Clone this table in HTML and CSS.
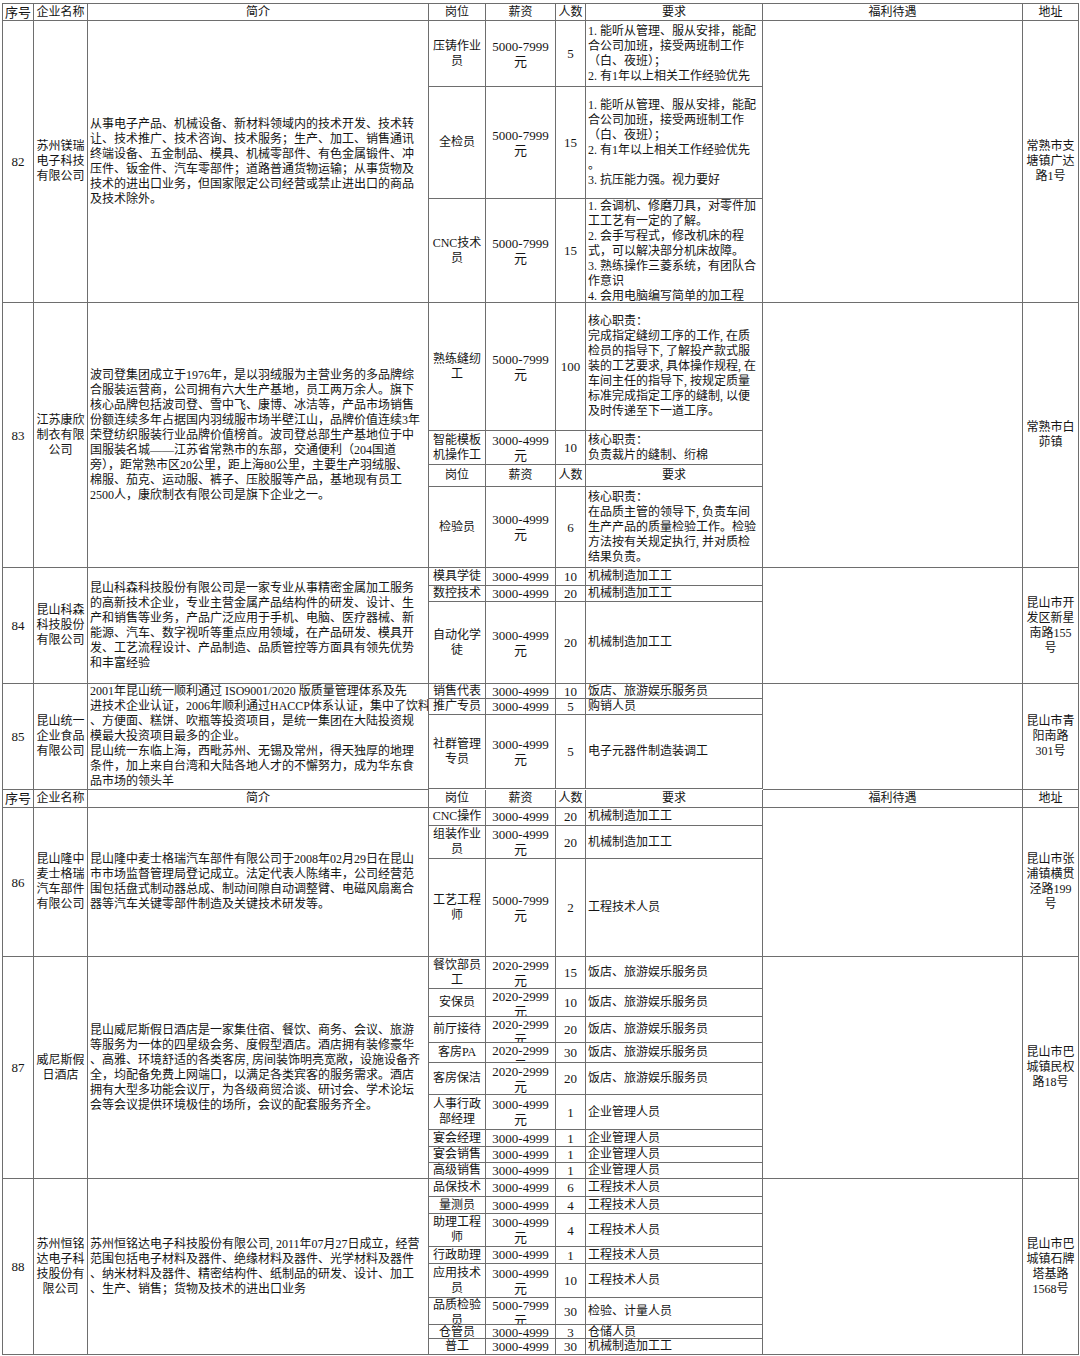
FILE: index.html
```html
<!DOCTYPE html>
<html lang="zh-CN">
<head>
<meta charset="utf-8">
<title>招聘信息表</title>
<link rel="stylesheet" href="styles.css">
</head>
<body>
<div class="sheet">

  <div class="row h17">
    <div class="c w-no"><div>序号</div></div>
    <div class="c w-name"><div>企业名称</div></div>
    <div class="c w-intro ctr"><div>简介</div></div>
    <div class="c w-pos"><div>岗位</div></div>
    <div class="c w-pay hd"><div>薪资</div></div>
    <div class="c w-num hd"><div>人数</div></div>
    <div class="c w-req ctr"><div>要求</div></div>
    <div class="c w-wel"><div>福利待遇</div></div>
    <div class="c w-addr"><div>地址</div></div>
  </div>

  <!-- 82 -->
  <div class="row">
    <div class="c w-no"><div>82</div></div>
    <div class="c w-name"><div>苏州镁瑞<br>电子科技<br>有限公司</div></div>
    <div class="c w-intro"><div>从事电子产品、机械设备、新材料领域内的技术开发、技术转<br>让、技术推广、技术咨询、技术服务；生产、加工、销售通讯<br>终端设备、五金制品、模具、机械零部件、有色金属锻件、冲<br>压件、钣金件、汽车零部件；道路普通货物运输；从事货物及<br>技术的进出口业务，但国家限定公司经营或禁止进出口的商品<br>及技术除外。</div></div>
    <div class="jobs">
      <div class="job h66">
        <div class="c w-pos"><div>压铸作业<br>员</div></div>
        <div class="c w-pay"><div>5000-7999<br>元</div></div>
        <div class="c w-num"><div>5</div></div>
        <div class="c w-req"><div>1. 能听从管理、服从安排，能配<br>合公司加班，接受两班制工作<br>（白、夜班）；<br>2. 有1年以上相关工作经验优先</div></div>
      </div>
      <div class="job h112">
        <div class="c w-pos"><div>全检员</div></div>
        <div class="c w-pay"><div>5000-7999<br>元</div></div>
        <div class="c w-num"><div>15</div></div>
        <div class="c w-req"><div>1. 能听从管理、服从安排，能配<br>合公司加班，接受两班制工作<br>（白、夜班）；<br>2. 有1年以上相关工作经验优先<br>。<br>3. 抗压能力强。视力要好</div></div>
      </div>
      <div class="job h104">
        <div class="c w-pos"><div>CNC技术<br>员</div></div>
        <div class="c w-pay"><div>5000-7999<br>元</div></div>
        <div class="c w-num"><div>15</div></div>
        <div class="c w-req"><div>1. 会调机、修磨刀具，对零件加<br>工工艺有一定的了解。<br>2. 会手写程式，修改机床的程<br>式，可以解决部分机床故障。<br>3. 熟练操作三菱系统，有团队合<br>作意识<br>4. 会用电脑编写简单的加工程<br>序</div></div>
      </div>
    </div>
    <div class="c w-wel"><div></div></div>
    <div class="c w-addr"><div>常熟市支<br>塘镇广达<br>路1号</div></div>
  </div>

  <!-- 83 -->
  <div class="row">
    <div class="c w-no"><div>83</div></div>
    <div class="c w-name"><div>江苏康欣<br>制衣有限<br>公司</div></div>
    <div class="c w-intro"><div>波司登集团成立于1976年，是以羽绒服为主营业务的多品牌综<br>合服装运营商，公司拥有六大生产基地，员工两万余人。旗下<br>核心品牌包括波司登、雪中飞、康博、冰洁等，产品市场销售<br>份额连续多年占据国内羽绒服市场半壁江山，品牌价值连续3年<br>荣登纺织服装行业品牌价值榜首。波司登总部生产基地位于中<br>国服装名城——江苏省常熟市的东部，交通便利（204国道<br>旁），距常熟市区20公里，距上海80公里，主要生产羽绒服、<br>棉服、茄克、运动服、裤子、压胶服等产品，基地现有员工<br>2500人，康欣制衣有限公司是旗下企业之一。</div></div>
    <div class="jobs">
      <div class="job h128">
        <div class="c w-pos"><div>熟练缝纫<br>工</div></div>
        <div class="c w-pay"><div>5000-7999<br>元</div></div>
        <div class="c w-num"><div>100</div></div>
        <div class="c w-req"><div>核心职责：<br>完成指定缝纫工序的工作, 在质<br>检员的指导下, 了解投产款式服<br>装的工艺要求, 具体操作规程, 在<br>车间主任的指导下, 按规定质量<br>标准完成指定工序的缝制, 以便<br>及时传递至下一道工序。</div></div>
      </div>
      <div class="job h34">
        <div class="c w-pos"><div>智能模板<br>机操作工</div></div>
        <div class="c w-pay"><div>3000-4999<br>元</div></div>
        <div class="c w-num"><div>10</div></div>
        <div class="c w-req"><div>核心职责：<br>负责裁片的缝制、绗棉</div></div>
      </div>
      <div class="job h22">
        <div class="c w-pos"><div>岗位</div></div>
        <div class="c w-pay hd"><div>薪资</div></div>
        <div class="c w-num hd"><div>人数</div></div>
        <div class="c w-req ctr"><div>要求</div></div>
      </div>
      <div class="job h81">
        <div class="c w-pos"><div>检验员</div></div>
        <div class="c w-pay"><div>3000-4999<br>元</div></div>
        <div class="c w-num"><div>6</div></div>
        <div class="c w-req"><div>核心职责：<br>在品质主管的领导下, 负责车间<br>生产产品的质量检验工作。检验<br>方法按有关规定执行, 并对质检<br>结果负责。</div></div>
      </div>
    </div>
    <div class="c w-wel"><div></div></div>
    <div class="c w-addr"><div>常熟市白<br>茆镇</div></div>
  </div>

  <!-- 84 -->
  <div class="row">
    <div class="c w-no"><div>84</div></div>
    <div class="c w-name"><div>昆山科森<br>科技股份<br>有限公司</div></div>
    <div class="c w-intro"><div>昆山科森科技股份有限公司是一家专业从事精密金属加工服务<br>的高新技术企业，专业主营金属产品结构件的研发、设计、生<br>产和销售等业务，产品广泛应用于手机、电脑、医疗器械、新<br>能源、汽车、数字视听等重点应用领域，在产品研发、模具开<br>发、工艺流程设计、产品制造、品质管控等方面具有领先优势<br>和丰富经验</div></div>
    <div class="jobs">
      <div class="job h18">
        <div class="c w-pos"><div>模具学徒</div></div>
        <div class="c w-pay"><div>3000-4999</div></div>
        <div class="c w-num"><div>10</div></div>
        <div class="c w-req"><div>机械制造加工工</div></div>
      </div>
      <div class="job h16">
        <div class="c w-pos"><div>数控技术<br>员</div></div>
        <div class="c w-pay"><div>3000-4999<br>元</div></div>
        <div class="c w-num"><div>20</div></div>
        <div class="c w-req"><div>机械制造加工工</div></div>
      </div>
      <div class="job h82">
        <div class="c w-pos"><div>自动化学<br>徒</div></div>
        <div class="c w-pay"><div>3000-4999<br>元</div></div>
        <div class="c w-num"><div>20</div></div>
        <div class="c w-req"><div>机械制造加工工</div></div>
      </div>
    </div>
    <div class="c w-wel"><div></div></div>
    <div class="c w-addr"><div>昆山市开<br>发区新星<br>南路155<br>号</div></div>
  </div>

  <!-- 85 -->
  <div class="row">
    <div class="c w-no"><div>85</div></div>
    <div class="c w-name"><div>昆山统一<br>企业食品<br>有限公司</div></div>
    <div class="c w-intro"><div>2001年昆山统一顺利通过 ISO9001/2020 版质量管理体系及先<br>进技术企业认证，2006年顺利通过HACCP体系认证，集中了饮料<br>、方便面、糕饼、吹瓶等投资项目，是统一集团在大陆投资规<br>模最大投资项目最多的企业。<br>昆山统一东临上海，西毗苏州、无锡及常州，得天独厚的地理<br>条件，加上来自台湾和大陆各地人才的不懈努力，成为华东食<br>品市场的领头羊</div></div>
    <div class="jobs">
      <div class="job h15">
        <div class="c w-pos"><div>销售代表</div></div>
        <div class="c w-pay"><div>3000-4999</div></div>
        <div class="c w-num"><div>10</div></div>
        <div class="c w-req"><div>饭店、旅游娱乐服务员</div></div>
      </div>
      <div class="job h16">
        <div class="c w-pos"><div>推广专员</div></div>
        <div class="c w-pay"><div>3000-4999</div></div>
        <div class="c w-num"><div>5</div></div>
        <div class="c w-req"><div>购销人员</div></div>
      </div>
      <div class="job h74">
        <div class="c w-pos"><div>社群管理<br>专员</div></div>
        <div class="c w-pay"><div>3000-4999<br>元</div></div>
        <div class="c w-num"><div>5</div></div>
        <div class="c w-req"><div>电子元器件制造装调工</div></div>
      </div>
    </div>
    <div class="c w-wel"><div></div></div>
    <div class="c w-addr"><div>昆山市青<br>阳南路<br>301号</div></div>
  </div>

  <div class="row h18">
    <div class="c w-no"><div>序号</div></div>
    <div class="c w-name"><div>企业名称</div></div>
    <div class="c w-intro ctr"><div>简介</div></div>
    <div class="c w-pos"><div>岗位</div></div>
    <div class="c w-pay hd"><div>薪资</div></div>
    <div class="c w-num hd"><div>人数</div></div>
    <div class="c w-req ctr"><div>要求</div></div>
    <div class="c w-wel"><div>福利待遇</div></div>
    <div class="c w-addr"><div>地址</div></div>
  </div>

  <!-- 86 -->
  <div class="row">
    <div class="c w-no"><div>86</div></div>
    <div class="c w-name"><div>昆山隆中<br>麦士格瑞<br>汽车部件<br>有限公司</div></div>
    <div class="c w-intro"><div>昆山隆中麦士格瑞汽车部件有限公司于2008年02月29日在昆山<br>市市场监督管理局登记成立。法定代表人陈绪丰，公司经营范<br>围包括盘式制动器总成、制动间隙自动调整臂、电磁风扇离合<br>器等汽车关键零部件制造及关键技术研发等。</div></div>
    <div class="jobs">
      <div class="job h18">
        <div class="c w-pos"><div>CNC操作</div></div>
        <div class="c w-pay"><div>3000-4999</div></div>
        <div class="c w-num"><div>20</div></div>
        <div class="c w-req"><div>机械制造加工工</div></div>
      </div>
      <div class="job h33">
        <div class="c w-pos"><div>组装作业<br>员</div></div>
        <div class="c w-pay"><div>3000-4999<br>元</div></div>
        <div class="c w-num"><div>20</div></div>
        <div class="c w-req"><div>机械制造加工工</div></div>
      </div>
      <div class="job h98">
        <div class="c w-pos"><div>工艺工程<br>师</div></div>
        <div class="c w-pay"><div>5000-7999<br>元</div></div>
        <div class="c w-num"><div>2</div></div>
        <div class="c w-req"><div>工程技术人员</div></div>
      </div>
    </div>
    <div class="c w-wel"><div></div></div>
    <div class="c w-addr"><div>昆山市张<br>浦镇横贯<br>泾路199<br>号</div></div>
  </div>

  <!-- 87 -->
  <div class="row">
    <div class="c w-no"><div>87</div></div>
    <div class="c w-name"><div>威尼斯假<br>日酒店</div></div>
    <div class="c w-intro"><div>昆山威尼斯假日酒店是一家集住宿、餐饮、商务、会议、旅游<br>等服务为一体的四星级会务、度假型酒店。酒店拥有装修豪华<br>、高雅、环境舒适的各类客房, 房间装饰明亮宽敞，设施设备齐<br>全，均配备免费上网端口，以满足各类宾客的服务需求。酒店<br>拥有大型多功能会议厅，为各级商贸洽谈、研讨会、学术论坛<br>会等会议提供环境极佳的场所，会议的配套服务齐全。</div></div>
    <div class="jobs">
      <div class="job h32">
        <div class="c w-pos"><div>餐饮部员<br>工</div></div>
        <div class="c w-pay"><div>2020-2999<br>元</div></div>
        <div class="c w-num"><div>15</div></div>
        <div class="c w-req"><div>饭店、旅游娱乐服务员</div></div>
      </div>
      <div class="job h28">
        <div class="c w-pos"><div>安保员</div></div>
        <div class="c w-pay"><div>2020-2999<br>元</div></div>
        <div class="c w-num"><div>10</div></div>
        <div class="c w-req"><div>饭店、旅游娱乐服务员</div></div>
      </div>
      <div class="job h26">
        <div class="c w-pos"><div>前厅接待</div></div>
        <div class="c w-pay"><div>2020-2999<br>元</div></div>
        <div class="c w-num"><div>20</div></div>
        <div class="c w-req"><div>饭店、旅游娱乐服务员</div></div>
      </div>
      <div class="job h20">
        <div class="c w-pos"><div>客房PA</div></div>
        <div class="c w-pay"><div>2020-2999<br>元</div></div>
        <div class="c w-num"><div>30</div></div>
        <div class="c w-req"><div>饭店、旅游娱乐服务员</div></div>
      </div>
      <div class="job h32">
        <div class="c w-pos"><div>客房保洁</div></div>
        <div class="c w-pay"><div>2020-2999<br>元</div></div>
        <div class="c w-num"><div>20</div></div>
        <div class="c w-req"><div>饭店、旅游娱乐服务员</div></div>
      </div>
      <div class="job h35">
        <div class="c w-pos"><div>人事行政<br>部经理</div></div>
        <div class="c w-pay"><div>3000-4999<br>元</div></div>
        <div class="c w-num"><div>1</div></div>
        <div class="c w-req"><div>企业管理人员</div></div>
      </div>
      <div class="job h17">
        <div class="c w-pos"><div>宴会经理</div></div>
        <div class="c w-pay"><div>3000-4999</div></div>
        <div class="c w-num"><div>1</div></div>
        <div class="c w-req"><div>企业管理人员</div></div>
      </div>
      <div class="job h16">
        <div class="c w-pos"><div>宴会销售</div></div>
        <div class="c w-pay"><div>3000-4999</div></div>
        <div class="c w-num"><div>1</div></div>
        <div class="c w-req"><div>企业管理人员</div></div>
      </div>
      <div class="job h16">
        <div class="c w-pos"><div>高级销售</div></div>
        <div class="c w-pay"><div>3000-4999</div></div>
        <div class="c w-num"><div>1</div></div>
        <div class="c w-req"><div>企业管理人员</div></div>
      </div>
    </div>
    <div class="c w-wel"><div></div></div>
    <div class="c w-addr"><div>昆山市巴<br>城镇民权<br>路18号</div></div>
  </div>

  <!-- 88 -->
  <div class="row">
    <div class="c w-no"><div>88</div></div>
    <div class="c w-name"><div>苏州恒铭<br>达电子科<br>技股份有<br>限公司</div></div>
    <div class="c w-intro"><div>苏州恒铭达电子科技股份有限公司, 2011年07月27日成立，经营<br>范围包括电子材料及器件、绝缘材料及器件、光学材料及器件<br>、纳米材料及器件、精密结构件、纸制品的研发、设计、加工<br>、生产、销售；货物及技术的进出口业务</div></div>
    <div class="jobs">
      <div class="job h18">
        <div class="c w-pos"><div>品保技术</div></div>
        <div class="c w-pay"><div>3000-4999</div></div>
        <div class="c w-num"><div>6</div></div>
        <div class="c w-req"><div>工程技术人员</div></div>
      </div>
      <div class="job h17">
        <div class="c w-pos"><div>量测员</div></div>
        <div class="c w-pay"><div>3000-4999</div></div>
        <div class="c w-num"><div>4</div></div>
        <div class="c w-req"><div>工程技术人员</div></div>
      </div>
      <div class="job h33">
        <div class="c w-pos"><div>助理工程<br>师</div></div>
        <div class="c w-pay"><div>3000-4999<br>元</div></div>
        <div class="c w-num"><div>4</div></div>
        <div class="c w-req"><div>工程技术人员</div></div>
      </div>
      <div class="job h17">
        <div class="c w-pos"><div>行政助理</div></div>
        <div class="c w-pay"><div>3000-4999<br>元</div></div>
        <div class="c w-num"><div>1</div></div>
        <div class="c w-req"><div>工程技术人员</div></div>
      </div>
      <div class="job h34">
        <div class="c w-pos"><div>应用技术<br>员</div></div>
        <div class="c w-pay"><div>3000-4999<br>元</div></div>
        <div class="c w-num"><div>10</div></div>
        <div class="c w-req"><div>工程技术人员</div></div>
      </div>
      <div class="job h27">
        <div class="c w-pos"><div>品质检验<br>员</div></div>
        <div class="c w-pay"><div>5000-7999<br>元</div></div>
        <div class="c w-num"><div>30</div></div>
        <div class="c w-req"><div>检验、计量人员</div></div>
      </div>
      <div class="job h14">
        <div class="c w-pos"><div>仓管员</div></div>
        <div class="c w-pay"><div>3000-4999</div></div>
        <div class="c w-num"><div>3</div></div>
        <div class="c w-req"><div>仓储人员</div></div>
      </div>
      <div class="job h16">
        <div class="c w-pos"><div>普工</div></div>
        <div class="c w-pay"><div>3000-4999</div></div>
        <div class="c w-num"><div>30</div></div>
        <div class="c w-req"><div>机械制造加工工</div></div>
      </div>
    </div>
    <div class="c w-wel"><div></div></div>
    <div class="c w-addr"><div>昆山市巴<br>城镇石牌<br>塔基路<br>1568号</div></div>
  </div>

</div>
</body>
</html>
```

FILE: styles.css
```css
html, body {
  margin: 0;
  padding: 0;
  background: #ffffff;
}

.sheet {
  margin: 3px 0 0 2px;
  width: 1077px;
  box-sizing: border-box;
  border-top: 1px solid #6e6e6e;
  border-left: 1px solid #6e6e6e;
  font-family: "Liberation Serif", "Noto Sans CJK SC", serif;
  font-size: 12px;
  line-height: 15px;
  color: #141414;
}

.row {
  display: flex;
}

.jobs {
  display: flex;
  flex-direction: column;
  width: 334px;
  flex: none;
}

.job {
  display: flex;
}

.c {
  box-sizing: border-box;
  display: flex;
  flex: none;
  overflow: hidden;
  white-space: nowrap;
  text-align: center;
  border-right: 1px solid #6e6e6e;
  border-bottom: 1px solid #6e6e6e;
}

.c > div {
  margin: auto;
}

.w-no { width: 31px; font-size: 13px; }
.w-name { width: 54px; }
.w-intro { width: 341px; text-align: left; padding-left: 2px; }
.w-pos { width: 57px; }
.w-pay { width: 70px; font-size: 13px; }
.w-num { width: 30px; font-size: 13px; }
.w-req { width: 177px; text-align: left; padding-left: 2px; }
.w-wel { width: 260px; }
.w-addr { width: 56px; }

.w-pay.hd,
.w-num.hd {
  font-size: 12px;
}

.w-intro > div,
.w-req > div {
  margin: auto 0;
}

.w-intro.ctr,
.w-req.ctr {
  text-align: center;
  padding-left: 0;
}

.w-intro.ctr > div,
.w-req.ctr > div {
  margin: auto;
}

.h14 { height: 14px; }
.h15 { height: 15px; }
.h16 { height: 16px; }
.h17 { height: 17px; }
.h18 { height: 18px; }
.h20 { height: 20px; }
.h22 { height: 22px; }
.h26 { height: 26px; }
.h27 { height: 27px; }
.h28 { height: 28px; }
.h32 { height: 32px; }
.h33 { height: 33px; }
.h34 { height: 34px; }
.h35 { height: 35px; }
.h66 { height: 66px; }
.h74 { height: 74px; }
.h81 { height: 81px; }
.h82 { height: 82px; }
.h98 { height: 98px; }
.h104 { height: 104px; }
.h112 { height: 112px; }
.h128 { height: 128px; }
```
